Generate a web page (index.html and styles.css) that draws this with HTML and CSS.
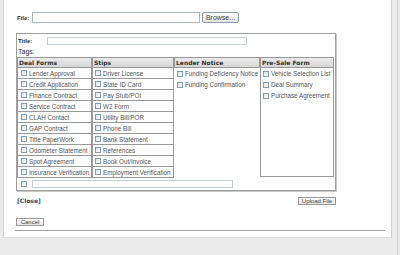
FILE: index.html
```html
<!DOCTYPE html>
<html>
<head>
<meta charset="utf-8">
<link rel="stylesheet" href="styles.css">
</head>
<body>
<div class="page">
  <div class="panel">
    <div class="content">
      <div class="file-row">
        <span class="lbl file-lbl">File:</span>
        <span class="file-input"></span>
        <button class="btn browse">Browse...</button>
      </div>
      <div class="box">
        <div class="title-row"><span class="lbl title-lbl">Title:</span><span class="title-input"></span></div>
        <div class="tags">Tags:</div>
        <div class="cols">
          <div class="col deal">
            <div class="hdr">Deal Forms</div>
            <div class="item"><span class="cb"></span>Lender Approval</div>
            <div class="item"><span class="cb"></span>Credit Application</div>
            <div class="item"><span class="cb"></span>Finance Contract</div>
            <div class="item"><span class="cb"></span>Service Contract</div>
            <div class="item"><span class="cb"></span>CLAH Contact</div>
            <div class="item"><span class="cb"></span>GAP Contract</div>
            <div class="item"><span class="cb"></span>Title PaperWork</div>
            <div class="item"><span class="cb"></span>Odometer Statement</div>
            <div class="item"><span class="cb"></span>Spot Agreement</div>
            <div class="item"><span class="cb"></span>Insurance Verification</div>
          </div>
          <div class="col stips">
            <div class="hdr">Stips</div>
            <div class="item"><span class="cb"></span>Driver License</div>
            <div class="item"><span class="cb"></span>State ID Card</div>
            <div class="item"><span class="cb"></span>Pay Stub/POI</div>
            <div class="item"><span class="cb"></span>W2 Form</div>
            <div class="item"><span class="cb"></span>Utility Bill/POR</div>
            <div class="item"><span class="cb"></span>Phone Bill</div>
            <div class="item"><span class="cb"></span>Bank Statement</div>
            <div class="item"><span class="cb"></span>References</div>
            <div class="item"><span class="cb"></span>Book Out/Invoice</div>
            <div class="item"><span class="cb"></span>Employment Verification</div>
          </div>
          <div class="col lender">
            <div class="hdr">Lender Notice</div>
            <div class="item"><span class="cb"></span>Funding Deficiency Notice</div>
            <div class="item"><span class="cb"></span>Funding Confirmation</div>
          </div>
          <div class="col presale">
            <div class="hdr">Pre-Sale Form</div>
            <div class="item"><span class="cb"></span>Vehicle Selection List</div>
            <div class="item"><span class="cb"></span>Deal Summary</div>
            <div class="item"><span class="cb"></span>Purchase Agreement</div>
          </div>
        </div>
        <div class="extra"><span class="cb"></span><span class="extra-input"></span></div>
      </div>
      <div class="actions">
        <a class="close">[Close]</a>
        <button class="btn upload">Upload File</button>
      </div>
      <div class="cancel-row"><button class="btn cancel">Cancel</button></div>
    </div>
  </div>
  <div class="rail"></div>
</div>
</body>
</html>
```
FILE: styles.css
```css
* { box-sizing: border-box; margin: 0; padding: 0; }
html, body { width: 400px; height: 255px; overflow: hidden; }
body { background: #ebebeb; font-family: "Liberation Sans", Arial, sans-serif; color: #333; }
.page { display: flex; height: 255px; }
.panel {
  margin-left: 3px; width: 389px; height: 238px; background: #fff;
  border-left: 1px solid #d2d2d2; border-right: 1px solid #d2d2d2; border-bottom: 1px solid #dcdcdc;
}
.rail { width: 6px; height: 255px; border-right: 1px solid #d4d4d4; }
.content {
  margin-left: 11px; width: 370px; height: 231px; padding-top: 12px;
  border-bottom: 1px solid #a4a4a4;
}
.lbl { font: bold 6px "Liberation Sans", Arial, sans-serif; color: #333; }
.file-row { display: flex; align-items: center; height: 11px; padding-left: 2px; }
.file-lbl { width: 15px; }
.file-input { width: 168px; height: 11px; border: 1px solid #a9b8c8; background: #fff; }
.btn {
  font: 6px "Liberation Sans", Arial, sans-serif; color: #444; height: 8px; line-height: 6px;
  border: 1px solid #9a9a9a; background: linear-gradient(#fdfdfd, #e4e4e4); padding: 0;
  display: flex; align-items: center; justify-content: center;
}
.browse { margin-left: 2px; width: 37px; height: 11px; font-size: 7px; border-color: #8a9ab0; border-radius: 2px; }
.box {
  margin: 10px 0 0 1px; width: 320px; height: 158px; border: 1px solid #a0a0a0;
  box-shadow: 1px 1px 0 #c8c8c8; display: flex; flex-direction: column;
}
.title-row { height: 12px; padding-top: 2px; padding-left: 1px; display: flex; align-items: center; }
.title-lbl { width: 29px; }
.title-input { width: 200px; height: 8px; border: 1px solid #c4ccd6; }
.tags { height: 11px; line-height: 11px; padding-left: 1px; font-size: 7px; color: #333; }
.cols { display: flex; height: 121px; }
.col { display: flex; flex-direction: column; }
.deal { width: 75px; border-left: 1px solid #999; border-right: 1px solid #999; }
.stips { width: 82px; border-left: 1px solid #999; border-right: 1px solid #999; }
.lender { width: 86px; }
.presale { width: 74px; height: 120px; border: 1px solid #999; }
.hdr {
  height: 11px; border-top: 1px solid #999; border-bottom: 1px solid #999;
  background: linear-gradient(#ebebeb, #d6d6d6); font: bold 6px "DejaVu Sans", Verdana, sans-serif;
  line-height: 9px; padding-left: 1px; color: #333; white-space: nowrap; overflow: hidden;
}
.lender .hdr { border-left: 1px solid #999; border-right: 1px solid #999; }
.presale .hdr { border-top: 0; height: 10px; }
.item {
  height: 11px; display: flex; align-items: center; font-size: 6.3px; color: #555;
  white-space: nowrap; overflow: hidden; padding-left: 3px;
}
.deal .item, .stips .item { border-bottom: 1px solid #999; }
.stips .item, .presale .item { padding-left: 2px; }
.cb {
  flex: none; width: 6px; height: 6px; margin-right: 2px;
  border: 1px solid #7f9db9; background: linear-gradient(135deg, #dce3ea, #fff);
}
.extra { flex: 1; display: flex; align-items: center; padding-left: 4px; }
.extra .cb { margin-right: 5px; }
.extra-input { width: 201px; height: 8px; border: 1px solid #c4ccd6; }
.actions {
  margin: 5px 0 0 1px; width: 320px; height: 9px; display: flex;
  justify-content: space-between; align-items: center;
}
.close { font: bold 6px "DejaVu Sans", Verdana, sans-serif; color: #3b4b6b; padding-left: 1px; }
.upload { width: 38px; }
.cancel-row { margin: 13px 0 0 1px; display: flex; }
.cancel { width: 28px; }
```
